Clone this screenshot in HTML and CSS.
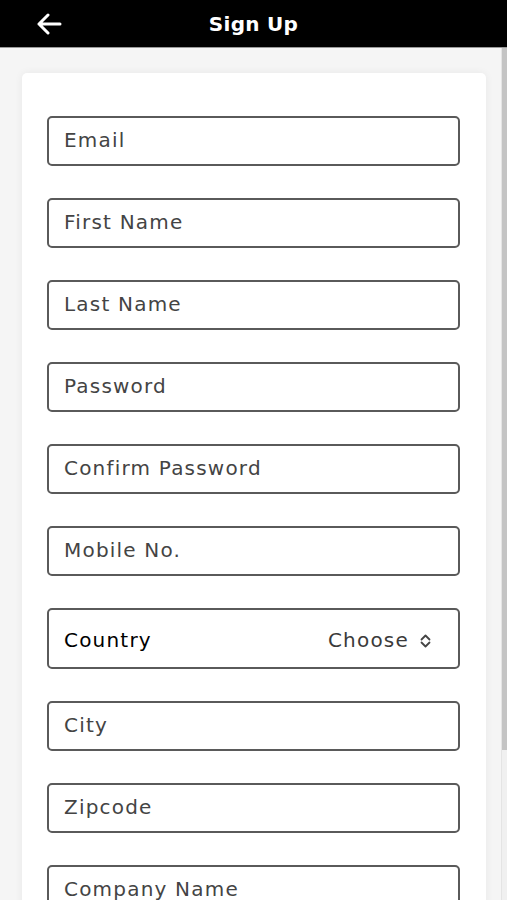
FILE: index.html
```html
<!DOCTYPE html>
<html lang="en">
<head>
    <meta charset="UTF-8">
    <meta name="viewport" content="width=device-width, initial-scale=1.0">
    <title>Sign Up</title>
    <link rel="stylesheet" href="styles.css">
</head>
<body>
    <div class="app">
        <header class="topbar">
            <button class="back-btn" aria-label="Back">
                <svg width="26" height="22" viewBox="0 0 26 22">
                    <path d="M24 11H3M12 2L3 11l9 9" fill="none" stroke="#fff" stroke-width="3" stroke-linecap="round" stroke-linejoin="round"/>
                </svg>
            </button>
            <h1 class="title">Sign Up</h1>
        </header>
        <div class="main">
            <div class="scroll-area">
                <form class="card" id="signupForm">
                    <input class="field" type="email" placeholder="Email">
                    <input class="field" type="text" placeholder="First Name">
                    <input class="field" type="text" placeholder="Last Name">
                    <input class="field" type="password" placeholder="Password">
                    <input class="field" type="password" placeholder="Confirm Password">
                    <input class="field" type="tel" placeholder="Mobile No.">
                    <div class="select-row">
                        <span class="select-label">Country</span>
                        <span class="select-value">Choose
                            <svg width="13" height="14" viewBox="0 0 13 14">
                                <path d="M2.5 5.5l4-4 4 4M2.5 8.5l4 4 4-4" fill="none" stroke="#444" stroke-width="1.8" stroke-linecap="round" stroke-linejoin="round"/>
                            </svg>
                        </span>
                    </div>
                    <input class="field" type="text" placeholder="City">
                    <input class="field" type="text" placeholder="Zipcode">
                    <input class="field" type="text" placeholder="Company Name">
                    <input class="field" type="text" placeholder="Address">
                    <button class="submit-btn" type="submit">Sign Up</button>
                </form>
            </div>
            <div class="scrollbar">
                <div class="scrollbar-thumb"></div>
            </div>
        </div>
    </div>
</body>
</html>
```

FILE: styles.css
```css
body {
    margin: 0;
    padding: 0;
    font-family: "DejaVu Sans", "Noto Sans", sans-serif;
    background-color: #f5f5f5;
}

.app {
    height: 100vh;
    display: flex;
    flex-direction: column;
    overflow: hidden;
}

.topbar {
    height: 47px;
    flex-shrink: 0;
    background: #000;
    border-bottom: 1px solid #9a9a9a;
    display: flex;
    align-items: center;
    justify-content: center;
    position: relative;
}

.back-btn {
    position: absolute;
    left: 36px;
    top: 13px;
    background: none;
    border: none;
    padding: 0;
    cursor: pointer;
    display: flex;
}

.title {
    margin: 0;
    color: #fff;
    font-size: 20px;
    font-weight: 600;
    letter-spacing: 0.3px;
}

.main {
    flex: 1;
    display: flex;
    min-height: 0;
}

.scroll-area {
    flex: 1;
    overflow: hidden;
    padding: 25px 15px 25px 22px;
}

.scrollbar {
    width: 5px;
    background: #f0f0f0;
    border-left: 1px solid #e4e4e4;
}

.scrollbar-thumb {
    height: 702px;
    background: #c4c4c4;
}

.card {
    background: #fff;
    border-radius: 5px;
    box-shadow: 0 0 8px rgba(0, 0, 0, 0.06);
    padding: 43px 26px 43px 25px;
    display: flex;
    flex-direction: column;
    gap: 32px;
}

.field, .select-row {
    box-sizing: border-box;
    width: 100%;
    height: 50px;
    margin: 0;
    padding: 0 15px 3px;
    border: 2px solid #5a5a5a;
    border-radius: 5px;
    font-family: inherit;
    font-size: 20px;
    letter-spacing: 1.2px;
    color: #333;
    background: #fff;
    outline: none;
}

.field::placeholder {
    color: #444;
}

.select-row {
    height: 61px;
    display: flex;
    align-items: center;
    justify-content: space-between;
    padding: 2px 26px 0 15px;
}

.select-label {
    color: #000;
}

.select-value {
    color: #3a3a3a;
    display: flex;
    align-items: center;
    gap: 10px;
}

.select-value svg {
    margin-top: 3px;
}

.submit-btn {
    height: 50px;
    border: none;
    border-radius: 5px;
    background: #000;
    color: #fff;
    font-family: inherit;
    font-size: 19px;
    cursor: pointer;
}
```
